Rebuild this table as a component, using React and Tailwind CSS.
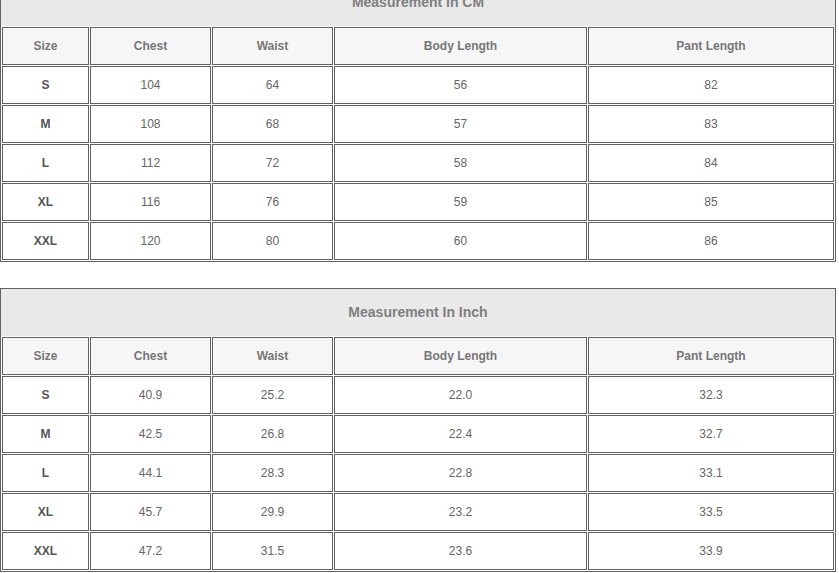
import React from 'react';

const cols = ['Size', 'Chest', 'Waist', 'Body Length', 'Pant Length'];
const widths = ['w-[87px]', 'w-[121px]', 'w-[121px]', 'w-[253px]', 'w-[246px]'];

const cmRows = [
  ['S', '104', '64', '56', '82'],
  ['M', '108', '68', '57', '83'],
  ['L', '112', '72', '58', '84'],
  ['XL', '116', '76', '59', '85'],
  ['XXL', '120', '80', '60', '86'],
];

const inchRows = [
  ['S', '40.9', '25.2', '22.0', '32.3'],
  ['M', '42.5', '26.8', '22.4', '32.7'],
  ['L', '44.1', '28.3', '22.8', '33.1'],
  ['XL', '45.7', '29.9', '23.2', '33.5'],
  ['XXL', '47.2', '31.5', '23.6', '33.9'],
];

const SizeTable = ({ title, rows, className = '' }) => (
  <div className={`w-[836px] border border-[#626262] bg-white ${className}`}>
    {/* Title bar */}
    <div className="h-[47px] bg-[#e9e9e9] flex items-center justify-center text-[14px] font-bold text-[#7f7f7f]">
      {title}
    </div>

    <table className="w-full table-fixed border-separate border-spacing-[1px]">
      <colgroup>
        {widths.map((w, i) => (
          <col key={i} className={w} />
        ))}
      </colgroup>
      <thead>
        <tr>
          {cols.map((c) => (
            <th
              key={c}
              className="h-[38px] p-0 border border-[#626262] bg-[#f6f6f6] text-center text-[12px] font-bold text-[#777]"
            >
              {c}
            </th>
          ))}
        </tr>
      </thead>
      <tbody>
        {rows.map((r) => (
          <tr key={r[0]}>
            {r.map((v, i) => (
              <td
                key={i}
                className={`h-[38px] p-0 border border-[#626262] bg-white text-center text-[12px] ${
                  i === 0 ? 'font-bold text-[#555]' : 'text-[#666]'
                }`}
              >
                {v}
              </td>
            ))}
          </tr>
        ))}
      </tbody>
    </table>
  </div>
);

const App = () => {
  return (
    <div
      className="w-[839px] h-[573px] overflow-hidden bg-white"
      style={{ fontFamily: '"Liberation Sans", Arial, sans-serif' }}
    >
      <SizeTable title="Measurement In CM" rows={cmRows} className="-mt-[22px]" />
      <SizeTable title="Measurement In Inch" rows={inchRows} className="mt-[26px]" />
    </div>
  );
};

export default App;
